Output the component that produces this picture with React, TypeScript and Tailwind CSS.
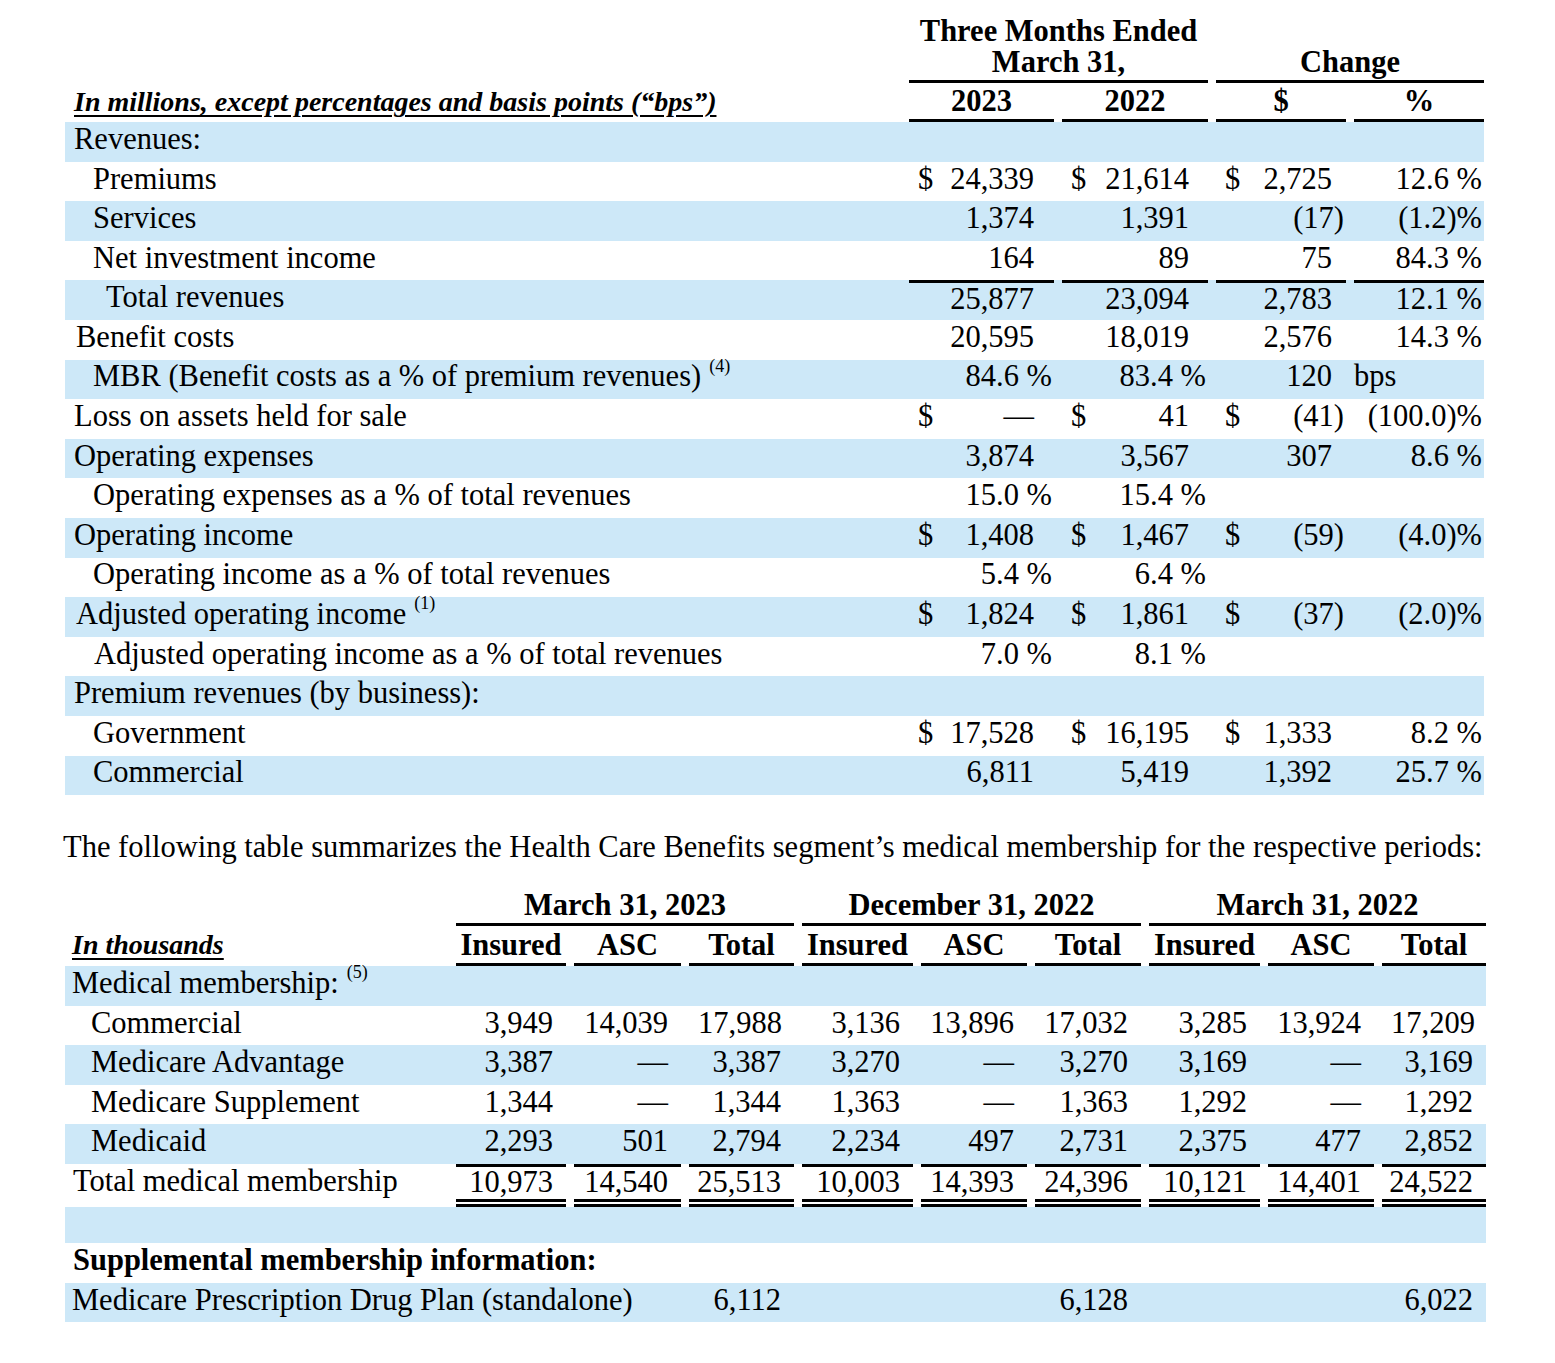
import React from "react";

type Cell = { p?: string; v: string; s?: string; left?: boolean };

interface Row {
  label: string;
  ind: string;
  shade?: boolean;
  top?: boolean;
  bold?: boolean;
  sup?: string;
  cells?: (Cell | null)[];
}

const BLUE = "bg-[#cde8f8]";
const T1 = "grid grid-cols-[1fr_145px_146px_130px_130px] gap-x-[8px]";
const T2 =
  "grid grid-cols-[1fr_110px_107px_105px_111px_106px_106px_111px_106px_104px] gap-x-[8px]";
const PAD1 = ["pr-[20px]", "pr-[19px]", "pr-[14px]", "pr-[2px]"];

const n = (v: string): Cell => ({ v });
const d = (v: string): Cell => ({ p: "$", v });
const pct = (v: string): Cell => ({ v, s: "\u00a0%" });

const rows1: Row[] = [
  { label: "Revenues:", ind: "pl-[9px]", shade: true },
  { label: "Premiums", ind: "pl-[28px]", cells: [d("24,339"), d("21,614"), d("2,725"), pct("12.6")] },
  { label: "Services", ind: "pl-[28px]", shade: true, cells: [n("1,374"), n("1,391"), { v: "(17", s: ")" }, { v: "(1.2", s: ")%" }] },
  { label: "Net investment income", ind: "pl-[28px]", cells: [n("164"), n("89"), n("75"), pct("84.3")] },
  { label: "Total revenues", ind: "pl-[41px]", shade: true, top: true, cells: [n("25,877"), n("23,094"), n("2,783"), pct("12.1")] },
  { label: "Benefit costs", ind: "pl-[11px]", cells: [n("20,595"), n("18,019"), n("2,576"), pct("14.3")] },
  {
    label: "MBR (Benefit costs as a % of premium revenues)",
    sup: "(4)",
    ind: "pl-[28px]",
    shade: true,
    cells: [pct("84.6"), pct("83.4"), n("120"), { v: "bps", left: true }],
  },
  { label: "Loss on assets held for sale", ind: "pl-[9px]", cells: [d("—"), d("41"), { p: "$", v: "(41", s: ")" }, { v: "(100.0", s: ")%" }] },
  { label: "Operating expenses", ind: "pl-[9px]", shade: true, cells: [n("3,874"), n("3,567"), n("307"), pct("8.6")] },
  { label: "Operating expenses as a % of total revenues", ind: "pl-[28px]", cells: [pct("15.0"), pct("15.4")] },
  { label: "Operating income", ind: "pl-[9px]", shade: true, cells: [d("1,408"), d("1,467"), { p: "$", v: "(59", s: ")" }, { v: "(4.0", s: ")%" }] },
  { label: "Operating income as a % of total revenues", ind: "pl-[28px]", cells: [pct("5.4"), pct("6.4")] },
  {
    label: "Adjusted operating income",
    sup: "(1)",
    ind: "pl-[11px]",
    shade: true,
    cells: [d("1,824"), d("1,861"), { p: "$", v: "(37", s: ")" }, { v: "(2.0", s: ")%" }],
  },
  { label: "Adjusted operating income as a % of total revenues", ind: "pl-[29px]", cells: [pct("7.0"), pct("8.1")] },
  { label: "Premium revenues (by business):", ind: "pl-[9px]", shade: true },
  { label: "Government", ind: "pl-[28px]", cells: [d("17,528"), d("16,195"), d("1,333"), pct("8.2")] },
  { label: "Commercial", ind: "pl-[28px]", shade: true, cells: [n("6,811"), n("5,419"), n("1,392"), pct("25.7")] },
];

const nine = (vals: string[]) => vals.map((v) => n(v));

const rows2: Row[] = [
  { label: "Medical membership:", sup: "(5)", ind: "pl-[7px]", shade: true },
  { label: "Commercial", ind: "pl-[26px]", cells: nine(["3,949", "14,039", "17,988", "3,136", "13,896", "17,032", "3,285", "13,924", "17,209"]) },
  { label: "Medicare Advantage", ind: "pl-[26px]", shade: true, cells: nine(["3,387", "—", "3,387", "3,270", "—", "3,270", "3,169", "—", "3,169"]) },
  { label: "Medicare Supplement", ind: "pl-[26px]", cells: nine(["1,344", "—", "1,344", "1,363", "—", "1,363", "1,292", "—", "1,292"]) },
  { label: "Medicaid", ind: "pl-[26px]", shade: true, cells: nine(["2,293", "501", "2,794", "2,234", "497", "2,731", "2,375", "477", "2,852"]) },
];

const totals2 = ["10,973", "14,540", "25,513", "10,003", "14,393", "24,396", "10,121", "14,401", "24,522"];

function Num({ c, pad, top }: { c?: Cell | null; pad: string; top?: boolean }) {
  const line = top ? "border-t-[3px] border-black" : "";
  if (!c) return <div className={line} />;
  if (c.left) return <div className={`flex items-center pb-[4px] ${line}`}>{c.v}</div>;
  return (
    <div className={`flex items-center pl-[9px] pb-[4px] ${c.s ? "pr-[2px]" : pad} ${line}`}>
      <span>{c.p}</span>
      <span className="flex-1 text-right whitespace-nowrap">
        {c.v}
        {c.s}
      </span>
    </div>
  );
}

function Label({ r }: { r: Row }) {
  return (
    <div className={`flex items-center pb-[4px] whitespace-nowrap ${r.ind} ${r.bold ? "font-bold" : ""}`}>
      {r.label}
      {r.sup && <sup className="text-[18px] ml-[8px] -top-[0.65em]">{r.sup}</sup>}
    </div>
  );
}

function RowOne({ r }: { r: Row }) {
  return (
    <div className={`${T1} grid-rows-[39.6px] h-[39.6px] ${r.shade ? BLUE : ""}`}>
      <Label r={r} />
      {PAD1.map((pad, i) => (
        <Num key={i} c={r.cells?.[i]} pad={pad} top={r.top} />
      ))}
    </div>
  );
}

function RowTwo({ r }: { r: Row }) {
  return (
    <div className={`${T2} grid-rows-[39.6px] h-[39.6px] ${r.shade ? BLUE : ""}`}>
      <Label r={r} />
      {Array.from({ length: 9 }).map((_, i) => (
        <Num key={i} c={r.cells?.[i]} pad="pr-[13px]" />
      ))}
    </div>
  );
}

export default function App() {
  return (
    <div className="w-[1555px] h-[1363px] bg-white text-black text-[30.5px] leading-normal font-['Liberation_Serif','Times_New_Roman',serif]">
      {/* segment results */}
      <div className="ml-[65px] w-[1419px] pt-[16px]">
        <div className={T1}>
          <div />
          <div className="col-span-2 text-center font-bold leading-[31px] pb-[2px] border-b-[3px] border-black">
            <div>Three Months Ended</div>
            <div>March 31,</div>
          </div>
          <div className="col-span-2 self-end text-center font-bold leading-[31px] pb-[2px] border-b-[3px] border-black">
            Change
          </div>
          <div className="h-[39px] leading-[38px] pl-[9px] text-[28px] italic font-bold underline underline-offset-[4px] decoration-[2px] whitespace-nowrap">
            In millions, except percentages and basis points (“bps”)
          </div>
          {["2023", "2022", "$", "%"].map((h) => (
            <div key={h} className="h-[39px] leading-[37px] text-center font-bold border-b-[3px] border-black">
              {h}
            </div>
          ))}
        </div>
        {rows1.map((r, i) => (
          <RowOne key={i} r={r} />
        ))}
      </div>

      <p className="mt-[32px] ml-[63px] leading-[40px] whitespace-nowrap">
        The following table summarizes the Health Care Benefits segment’s medical membership for the respective periods:
      </p>

      {/* membership */}
      <div className="ml-[65px] w-[1421px] mt-[20px]">
        <div className={T2}>
          <div />
          {["March 31, 2023", "December 31, 2022", "March 31, 2022"].map((g) => (
            <div key={g} className="col-span-3 text-center font-bold leading-[36px] border-b-[3px] border-black">
              {g}
            </div>
          ))}
          <div className="h-[40px] leading-[38px] pl-[7px] text-[28px] italic font-bold underline underline-offset-[4px] decoration-[2px]">
            In thousands
          </div>
          {["Insured", "ASC", "Total", "Insured", "ASC", "Total", "Insured", "ASC", "Total"].map((h, i) => (
            <div key={i} className="h-[40px] leading-[39px] text-center font-bold border-b-[3px] border-black">
              {h}
            </div>
          ))}
        </div>
        {rows2.map((r, i) => (
          <RowTwo key={i} r={r} />
        ))}
        <div className={`${T2} grid-rows-[43px] h-[43px]`}>
          <div className="flex items-center pl-[8px] pb-[8px] whitespace-nowrap">Total medical membership</div>
          {totals2.map((v, i) => (
            <div key={i} className="h-[43px] border-b-[8px] border-double border-black">
              <div className="h-[35px] border-t-[3px] border-solid border-black flex items-center justify-end pr-[13px] pb-[3px] leading-[28px]">
                {v}
              </div>
            </div>
          ))}
        </div>
        <div className={`h-[36px] ${BLUE}`} />
        <div className="h-[39.6px] flex items-center pl-[8px] pb-[4px] font-bold whitespace-nowrap">
          Supplemental membership information:
        </div>
        <div className={`${T2} grid-rows-[39.6px] h-[39.6px] ${BLUE}`}>
          <div className="col-span-3 flex items-center pl-[7px] pb-[4px] whitespace-nowrap">
            Medicare Prescription Drug Plan (standalone)
          </div>
          <Num c={n("6,112")} pad="pr-[13px]" />
          <div />
          <div />
          <Num c={n("6,128")} pad="pr-[13px]" />
          <div />
          <div />
          <Num c={n("6,022")} pad="pr-[13px]" />
        </div>
      </div>
    </div>
  );
}
